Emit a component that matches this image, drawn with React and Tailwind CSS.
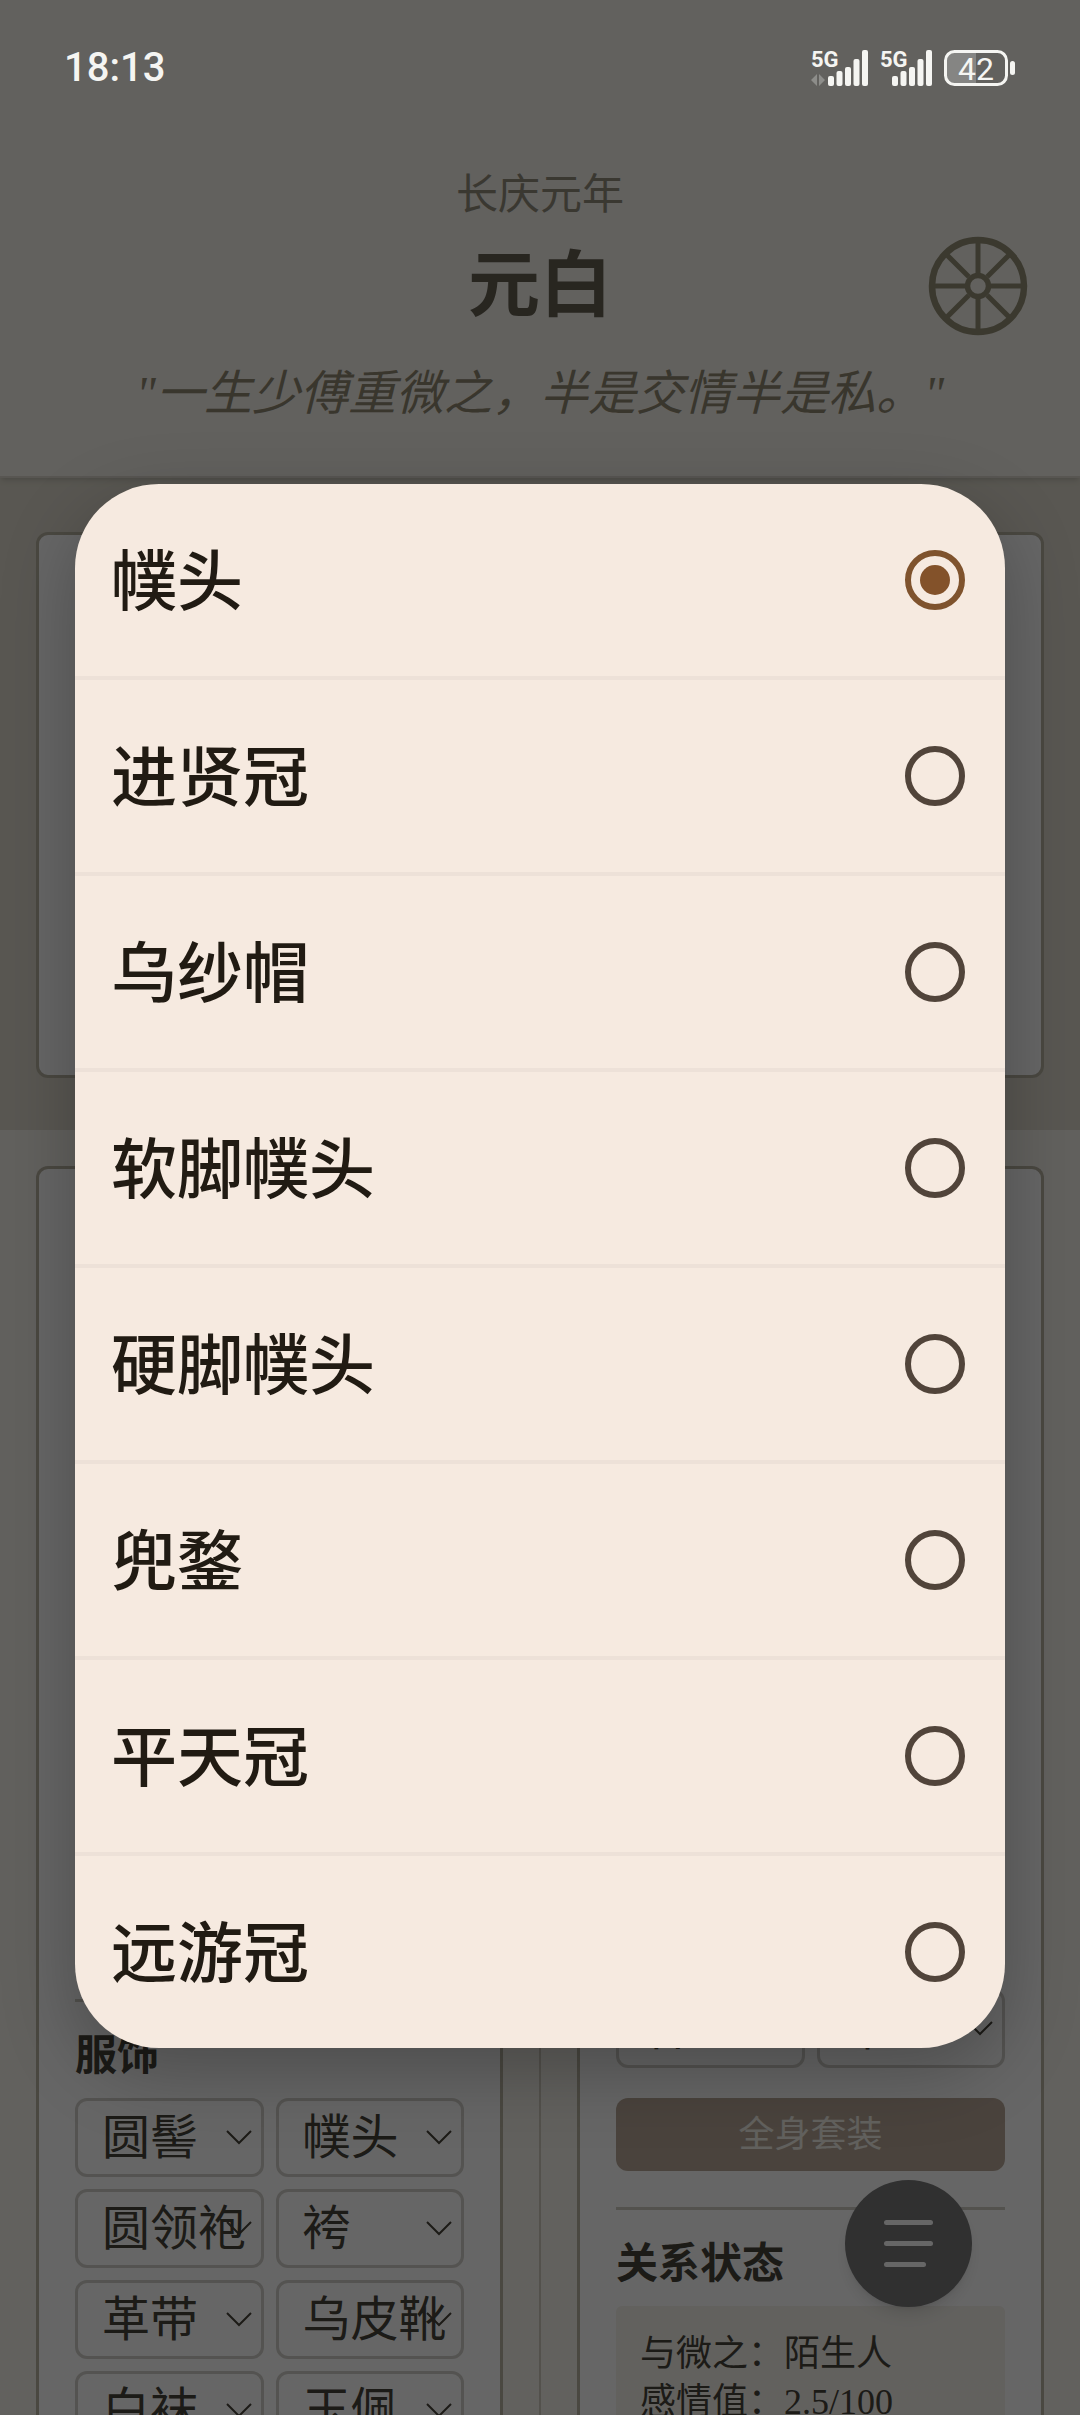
import React, { useState } from "react";

const HATS = ["幞头", "进贤冠", "乌纱帽", "软脚幞头", "硬脚幞头", "兜鍪", "平天冠", "远游冠"];

const OUTFIT = [
  { name: "发型", options: ["圆髻"] },
  { name: "头饰", options: HATS },
  { name: "衣袍", options: ["圆领袍"] },
  { name: "下装", options: ["袴"] },
  { name: "腰带", options: ["革带"] },
  { name: "鞋履", options: ["乌皮靴"] },
  { name: "袜", options: ["白袜"] },
  { name: "佩饰", options: ["玉佩"] },
];

const Signal = ({ start, roaming }) => (
  <svg width={start + 40} height="52" viewBox={`0 -8 ${start + 40} 52`} fill="#f5f5f2">
    <text x="0" y="17" fontSize="22" fontWeight="700" fontFamily="Roboto, sans-serif">
      5G
    </text>
    {roaming && <path d="M0 30l6-6v12zM14 30l-6-6v12z" fill="#8d8d8a" />}
    {[26, 21, 17, 9, 0].map((top, i) => (
      <rect key={top} x={start + i * 8.5} y={top} width="6" height={36 - top} rx="2" />
    ))}
  </svg>
);

const Battery = () => (
  <svg width="72" height="52" viewBox="0 -8 72 52">
    <path d="M10 2h22v32H10a8 8 0 0 1-8-8V10a8 8 0 0 1 8-8z" fill="#858583" />
    <rect x="1.5" y="1.5" width="61" height="33" rx="9" fill="none" stroke="#f5f5f2" strokeWidth="3" />
    <rect x="66" y="11" width="5" height="14" rx="2.5" fill="#f5f5f2" />
    <text x="32" y="30" textAnchor="middle" fontSize="32" fontFamily="Roboto, sans-serif" fill="#f5f5f2">
      42
    </text>
  </svg>
);

const StatusBar = () => (
  <div className="absolute inset-x-0 top-0 z-30 flex items-center justify-between pt-10 pr-16 pl-16 text-[#f5f5f2]">
    <span className="font-[Roboto,sans-serif] text-[40px] leading-14 font-medium">18:13</span>
    <div className="flex items-center gap-3">
      <Signal start={17} roaming />
      <Signal start={12} />
      <Battery />
    </div>
  </div>
);

const Wheel = () => (
  <svg width="100" height="100" viewBox="0 0 100 100" fill="none" stroke="#948f76">
    <circle cx="50" cy="50" r="46" strokeWidth="6.5" />
    <circle cx="50" cy="50" r="10.5" strokeWidth="5.5" />
    {[0, 45, 90, 135, 180, 225, 270, 315].map((deg) => (
      <path key={deg} d="M50 37V6" strokeWidth="5" transform={`rotate(${deg} 50 50)`} />
    ))}
  </svg>
);

const SelectBox = ({ name, options, value, onChange }) => (
  <div className="relative">
    <select
      aria-label={name}
      value={value}
      onChange={onChange}
      className="block h-[79px] w-full appearance-none rounded-xl border-3 border-[#d2d0ca] bg-white pl-6 text-[48px] leading-[70px] text-[#48443a]"
    >
      {options.map((option) => (
        <option key={option}>{option}</option>
      ))}
    </select>
    <svg
      className="pointer-events-none absolute top-8 right-3"
      width="26"
      height="15"
      viewBox="0 0 26 15"
      fill="none"
      stroke="#48443a"
      strokeWidth="2"
    >
      <path d="M1 1l12 12L25 1" />
    </svg>
  </div>
);

const Header = () => (
  <header className="relative border-b-2 border-[#dcd8ce] bg-[#f4f2eb] px-[52px] pt-[162px] pb-11 text-center shadow-md">
    <p className="text-[42px] leading-[66px] text-[#928c7c]">长庆元年</p>
    <div className="mt-2 grid grid-cols-[1fr_auto_1fr] items-center">
      <h1 className="col-start-2 text-[72px] leading-[100px] font-bold text-[#655f52]">元白</h1>
      <button aria-label="设置" className="justify-self-end">
        <Wheel />
      </button>
    </div>
    <p className="mt-5 text-[48px] leading-[76px] text-[#8f8770] italic">
      "一生少傅重微之，半是交情半是私。"
    </p>
  </header>
);

const HatDialog = ({ value, onChange }) => (
  <div className="absolute inset-0 z-20 flex items-start justify-center bg-black/60 px-[75px] pt-[484px]">
    <div
      role="dialog"
      aria-label="头饰"
      className="w-full overflow-hidden rounded-[84px] bg-[#f6eae0] shadow-[0_24px_72px_rgba(0,0,0,0.25)]"
    >
      {HATS.map((hat) => (
        <label
          key={hat}
          className="flex h-49 items-center justify-between border-b-4 border-[#ede1d8] pr-10 pl-9 text-[66px] font-medium text-[#211b13] last:h-48 last:border-b-0"
        >
          <span className="pt-1">{hat}</span>
          <input
            type="radio"
            name="hat"
            value={hat}
            checked={value === hat}
            onChange={() => onChange(hat)}
            className="grid size-15 appearance-none place-items-center rounded-full border-6 border-[#51443a] before:size-[30px] before:rounded-full checked:border-[#7f532d] checked:before:bg-[#83522a]"
          />
        </label>
      ))}
    </div>
  </div>
);

const App = () => {
  const [hat, setHat] = useState("幞头");

  return (
    <div className="relative h-screen overflow-hidden bg-[#f4f2eb] font-['Liberation_Serif','Noto_Sans_CJK_SC',serif]">
      <StatusBar />
      <Header />

      <section className="bg-[#dedacc] px-9 pt-[54px] pb-[52px]">
        <div className="min-h-[546px] rounded-xl border-3 border-[#b8b3a4] bg-white" />
      </section>

      <main className="grid grid-cols-[1fr_2px_1fr] gap-x-9 px-9 pt-9">
        <section className="rounded-t-xl border-3 border-b-0 border-[#b8b3a4] bg-white px-9">
          <div className="min-h-[830px]" />
          <div className="border-t-3 border-[#cfccc4] pt-6">
            <h2 className="text-[42px] leading-[60px] font-bold text-[#48443a]">服饰</h2>
            <div className="mt-3 grid grid-cols-2 gap-3">
              {OUTFIT.map(({ name, options }) => (
                <SelectBox
                  key={name}
                  name={name}
                  options={options}
                  value={name === "头饰" ? hat : options[0]}
                  onChange={(e) => name === "头饰" && setHat(e.target.value)}
                />
              ))}
            </div>
          </div>
        </section>

        <div className="-mt-9 bg-[#cfcbbf]" />

        <section className="rounded-t-xl border-3 border-b-0 border-[#b8b3a4] bg-white px-9">
          <div className="min-h-[820px]" />
          <div className="grid grid-cols-2 gap-3">
            <SelectBox name="季节" options={["春"]} value="春" onChange={() => {}} />
            <SelectBox name="时辰" options={["午"]} value="午" onChange={() => {}} />
          </div>
          <button className="mt-[30px] block h-[73px] w-full rounded-xl bg-[#b9a999] text-[36px] text-[#f4f2eb]">
            全身套装
          </button>
          <div className="mt-9 border-t-3 border-[#cfccc4] pt-6">
            <h2 className="text-[42px] leading-[60px] font-bold text-[#48443a]">关系状态</h2>
            <div className="mt-3 h-40 rounded-md bg-[#f4f2eb] px-6 py-6 text-[36px] leading-12 text-[#48443a]">
              <p>与微之：陌生人</p>
              <p>感情值：2.5/100</p>
            </div>
          </div>
        </section>
      </main>

      <button
        aria-label="菜单"
        className="absolute right-[108px] bottom-[108px] z-10 flex size-[127px] flex-col justify-center gap-4 rounded-full bg-[#787878] pl-[39px] shadow-lg"
      >
        <span className="h-[5px] w-[49px] rounded-full bg-white" />
        <span className="h-[5px] w-[49px] rounded-full bg-white" />
        <span className="h-[5px] w-[42px] rounded-full bg-white" />
      </button>

      <HatDialog value={hat} onChange={setHat} />
    </div>
  );
};

export default App;
